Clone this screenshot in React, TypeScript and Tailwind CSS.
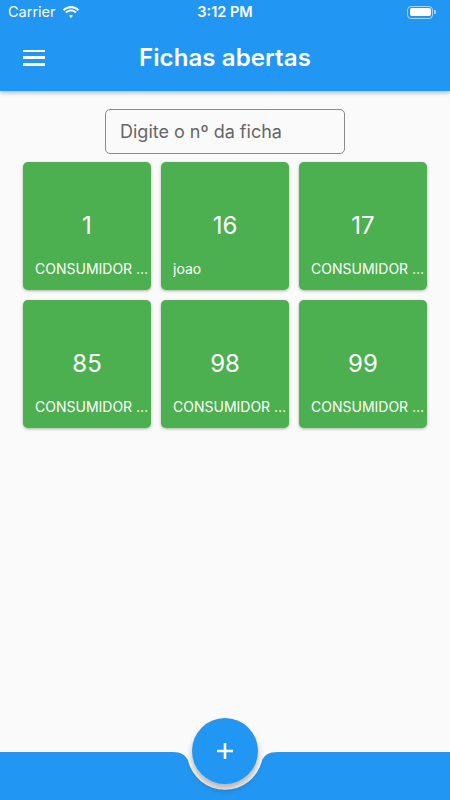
import React from "react";

const cards = [
  { n: "1", label: "CONSUMIDOR FINAL" },
  { n: "16", label: "joao" },
  { n: "17", label: "CONSUMIDOR FINAL" },
  { n: "85", label: "CONSUMIDOR FINAL" },
  { n: "98", label: "CONSUMIDOR FINAL" },
  { n: "99", label: "CONSUMIDOR FINAL" },
];

function Wifi() {
  return (
    <svg width="18" height="13" viewBox="0 0 18 13" fill="white">
      <path d="M9 2.2c2.6 0 5 1 6.8 2.7l1.4-1.5C15 1.3 12.1 0 9 0S3 1.3.8 3.4l1.4 1.5C4 3.2 6.4 2.2 9 2.2z" />
      <path d="M9 5.6c1.7 0 3.2.6 4.4 1.7l1.4-1.5C13.3 4.3 11.2 3.4 9 3.4S4.7 4.3 3.2 5.8l1.4 1.5C5.8 6.2 7.3 5.6 9 5.6z" />
      <path d="M9 8.9c.8 0 1.5.3 2 .8L9 12 7 9.7c.5-.5 1.2-.8 2-.8z" />
    </svg>
  );
}

export default function App() {
  return (
    <div
      className="relative flex min-h-[800px] w-[450px] flex-col bg-[#fafafa]"
      style={{ fontFamily: "Inter, 'Noto Sans', sans-serif" }}
    >
      <header className="z-10 bg-[#2196f3] text-white shadow-[0_2px_4px_rgba(0,0,0,0.25)]">
        <div className="relative flex h-[24px] items-center justify-between px-[8px]">
          <div className="flex items-center gap-[6px] text-[14.5px]">
            <span>Carrier</span>
            <Wifi />
          </div>
          <span className="absolute left-1/2 -translate-x-1/2 text-[14.5px] font-semibold">3:12 PM</span>
          <div className="flex items-center gap-[1px] pr-[6px]">
            <div className="flex h-[13px] w-[26px] items-center rounded-[4px] border border-white/60 p-[1.5px]">
              <div className="h-full w-full rounded-[2px] bg-white" />
            </div>
            <div className="h-[4px] w-[2px] rounded-r-[1px] bg-white/60" />
          </div>
        </div>
        <div className="relative flex h-[67px] items-center justify-center">
          <button className="absolute left-[23px] flex h-[16px] w-[22px] flex-col justify-between">
            <span className="h-[2.5px] w-full bg-white" />
            <span className="h-[2.5px] w-full bg-white" />
            <span className="h-[2.5px] w-full bg-white" />
          </button>
          <h1 className="text-[24px] font-semibold tracking-[0.1px]">Fichas abertas</h1>
        </div>
      </header>

      <main className="flex flex-1 flex-col items-center pt-[18px]">
        <div className="flex h-[45px] w-[240px] items-center rounded-[5px] border border-[#8a8a8a] px-[14px]">
          <span className="text-[18px] text-[#666666]">Digite o nº da ficha</span>
        </div>
        <div className="mt-[8px] grid grid-cols-3 gap-[10px]">
          {cards.map((c) => (
            <div
              key={c.n}
              className="flex h-[128px] w-[128px] flex-col rounded-[5px] bg-[#4caf50] pl-[12px] pt-[49px] text-white shadow-[0_1px_3px_rgba(0,0,0,0.3)]"
            >
              <div className="pr-[12px] text-center text-[24px] leading-[30px]">{c.n}</div>
              <div className="mt-[19px] overflow-hidden text-ellipsis whitespace-nowrap text-[14px] leading-[18px]">
                {c.label}
              </div>
            </div>
          ))}
        </div>
      </main>

      <footer className="relative h-[48px]">
        <svg className="absolute inset-0" width="450" height="48" viewBox="0 0 450 48">
          <path
            d="M0 0 H172 C182 0 185 3 187.9 8 A38 38 0 0 0 262.1 8 C265 3 268 0 278 0 H450 V48 H0 Z"
            fill="#2196f3"
          />
        </svg>
        <button className="absolute left-[192px] top-[-34px] flex h-[66px] w-[66px] items-center justify-center rounded-full bg-[#2196f3] shadow-[0_5px_6px_rgba(0,0,0,0.28)]">
          <svg width="18" height="18" viewBox="0 0 18 18">
            <path d="M9 1v16M1 9h16" stroke="white" strokeWidth="2.6" />
          </svg>
        </button>
      </footer>
    </div>
  );
}
